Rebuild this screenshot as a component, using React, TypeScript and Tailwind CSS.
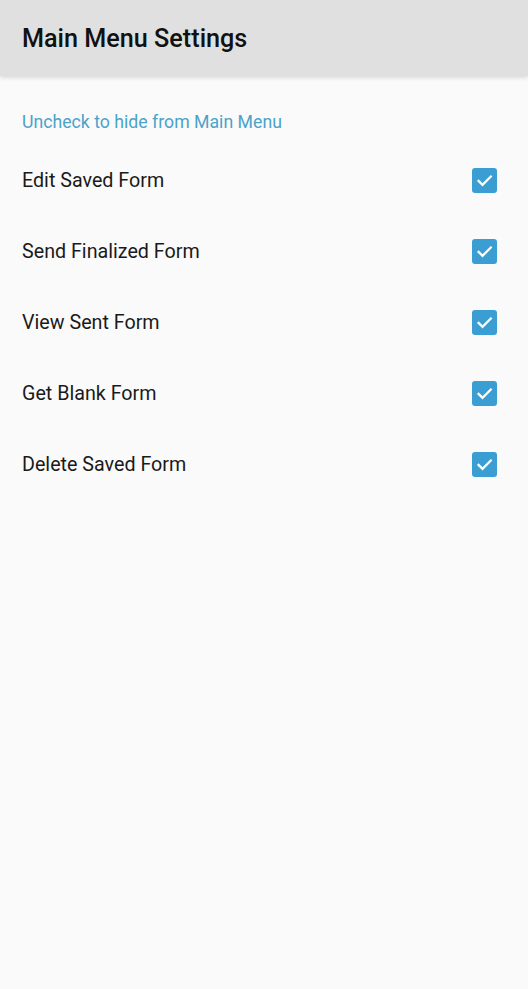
import React from "react";

const items = [
  "Edit Saved Form",
  "Send Finalized Form",
  "View Sent Form",
  "Get Blank Form",
  "Delete Saved Form",
];

function Check() {
  return (
    <div className="w-[25px] h-[25px] rounded-[3px] bg-[#3a9ed3] flex items-center justify-center">
      <svg width="19" height="19" viewBox="0 0 24 24" fill="none">
        <path d="M4.5 12.5l5 5L20 7" stroke="#ffffff" strokeWidth="2.8" strokeLinecap="square" />
      </svg>
    </div>
  );
}

export default function App() {
  return (
    <div className="w-[528px] h-[989px] bg-[#fafafa] flex flex-col" style={{ fontFamily: "Roboto, 'Noto Sans', sans-serif" }}>
      <div className="h-[76px] bg-[#e0e0e0] flex items-center px-[22px] pt-[1px] shadow-[0_2px_4px_rgba(0,0,0,0.12)] relative z-10">
        <h1 className="text-[25.2px] font-medium text-[#111111]">Main Menu Settings</h1>
      </div>
      <div className="flex flex-col">
        <div className="h-[36px] mt-[28px] flex items-center px-[22px] text-[17.7px] text-[#4aa3c9]">
          Uncheck to hide from Main Menu
        </div>
        <div className="flex flex-col mt-[5px]">
          {items.map((t) => (
            <div key={t} className="h-[71px] flex items-center justify-between pl-[22px] pr-[31px]">
              <span className="text-[19.7px] text-[#1a1a1a]">{t}</span>
              <Check />
            </div>
          ))}
        </div>
      </div>
    </div>
  );
}
